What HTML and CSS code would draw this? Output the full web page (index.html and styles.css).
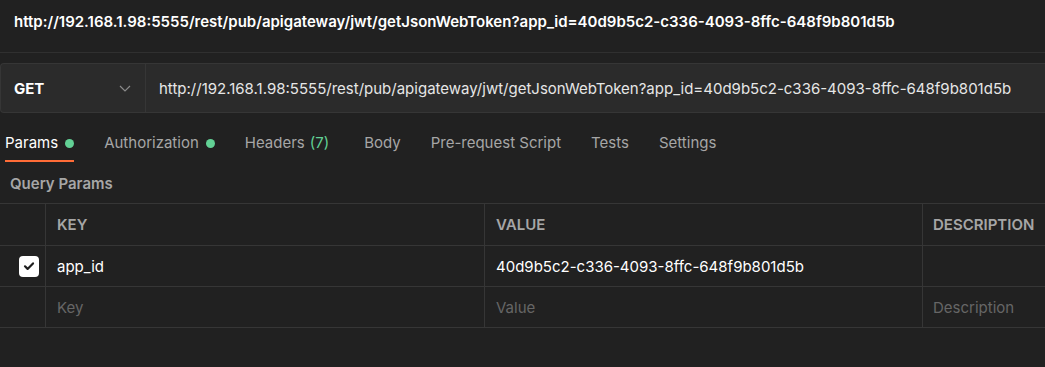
FILE: index.html
```html
<!DOCTYPE html>
<html lang="en">
<head>
<meta charset="utf-8">
<title>Request</title>
<link rel="stylesheet" href="styles.css">
</head>
<body>
  <header class="title-bar">
    <span class="title">http://192.168.1.98:5555/rest/pub/apigateway/jwt/getJsonWebToken?app_id=40d9b5c2-c336-4093-8ffc-648f9b801d5b</span>
  </header>

  <div class="request">
    <div class="method">
      <span class="method-name">GET</span>
      <svg class="chevron" width="12" height="7" viewBox="0 0 12 7"><path d="M1 1l5 5 5-5" fill="none" stroke="#8a8a8a" stroke-width="1.2"/></svg>
    </div>
    <div class="url">http://192.168.1.98:5555/rest/pub/apigateway/jwt/getJsonWebToken?app_id=40d9b5c2-c336-4093-8ffc-648f9b801d5b</div>
  </div>

  <nav class="tabs">
    <span class="tab active">Params <i class="dot"></i></span>
    <span class="tab">Authorization <i class="dot"></i></span>
    <span class="tab tab-headers">Headers <span class="count">(7)</span></span>
    <span class="tab">Body</span>
    <span class="tab">Pre-request Script</span>
    <span class="tab">Tests</span>
    <span class="tab">Settings</span>
  </nav>

  <div class="section-label">Query Params</div>

  <div class="table">
    <div class="row head">
      <div class="cell check"></div>
      <div class="cell">KEY</div>
      <div class="cell">VALUE</div>
      <div class="cell last">DESCRIPTION</div>
    </div>
    <div class="row">
      <div class="cell check">
        <span class="checkbox"><svg width="14" height="14" viewBox="0 0 14 14"><path d="M3 7.3l2.6 2.6L11 4.4" fill="none" stroke="#1e1e1e" stroke-width="2.2" stroke-linecap="round" stroke-linejoin="round"/></svg></span>
      </div>
      <div class="cell text">app_id</div>
      <div class="cell text">40d9b5c2-c336-4093-8ffc-648f9b801d5b</div>
      <div class="cell last"></div>
    </div>
    <div class="row">
      <div class="cell check"></div>
      <div class="cell placeholder">Key</div>
      <div class="cell placeholder">Value</div>
      <div class="cell last placeholder">Description</div>
    </div>
  </div>
</body>
</html>
```

FILE: styles.css
```css
* { box-sizing: border-box; }
html, body {
  margin: 0;
  padding: 0;
  background: #212121;
  font-family: Inter, "Noto Sans", sans-serif;
  font-size: 15px;
  color: #a6a6a6;
  overflow: hidden;
}

.title-bar {
  height: 53px;
  padding: 12px 14px 0;
  border-bottom: 1px solid #303030;
}
.title {
  display: block;
  line-height: 20px;
  font-weight: 600;
  color: #ffffff;
  white-space: nowrap;
}

.request {
  margin-top: 10px;
  height: 50px;
  display: flex;
  border: 1px solid #363636;
  border-right: none;
  border-radius: 4px 0 0 4px;
  background: #2b2b2b;
}
.method {
  width: 145px;
  flex: none;
  display: flex;
  align-items: center;
  justify-content: space-between;
  padding: 0 14px 0 13px;
  border-right: 1px solid #363636;
}
.method-name {
  font-weight: 700;
  color: #ffffff;
}
.chevron { margin-top: 1px; }
.url {
  flex: 1;
  display: flex;
  align-items: center;
  padding-left: 13px;
  color: #e6e6e6;
  white-space: nowrap;
}

.tabs {
  display: flex;
  gap: 30px;
  padding: 20px 0 0 5px;
}
.tab {
  display: flex;
  align-items: center;
  line-height: 20px;
  padding-bottom: 7px;
  border-bottom: 2px solid transparent;
  color: #a6a6a6;
  white-space: nowrap;
}
.tab.active {
  color: #ffffff;
  border-bottom-color: #ff6c37;
}
.tab-headers { margin-right: 5px; }
.dot {
  display: inline-block;
  width: 9px;
  height: 9px;
  margin-left: 7px;
  border-radius: 50%;
  background: #62d195;
}
.count {
  color: #62d195;
  margin-left: 5px;
}

.section-label {
  margin-top: 12px;
  padding-left: 10px;
  line-height: 20px;
  font-weight: 600;
  color: #a6a6a6;
}

.table {
  margin-top: 9px;
  border-top: 1px solid #363636;
}
.row {
  display: grid;
  grid-template-columns: 46px 439px 438px 1fr;
  height: 41px;
  border-bottom: 1px solid #363636;
}
.row.head {
  height: 42px;
}
.row.head .cell {
  font-weight: 600;
  color: #a6a6a6;
}
.cell {
  display: flex;
  align-items: center;
  padding: 0 11px;
  border-right: 1px solid #363636;
  white-space: nowrap;
}
.cell.last {
  border-right: none;
  padding-left: 10px;
}
.cell.check {
  padding: 0 0 0 19px;
}
.cell.text { color: #ffffff; }
.cell.placeholder { color: #666666; }

.checkbox {
  width: 20px;
  height: 21px;
  border-radius: 4px;
  background: #ffffff;
  display: flex;
  align-items: center;
  justify-content: center;
}
```
